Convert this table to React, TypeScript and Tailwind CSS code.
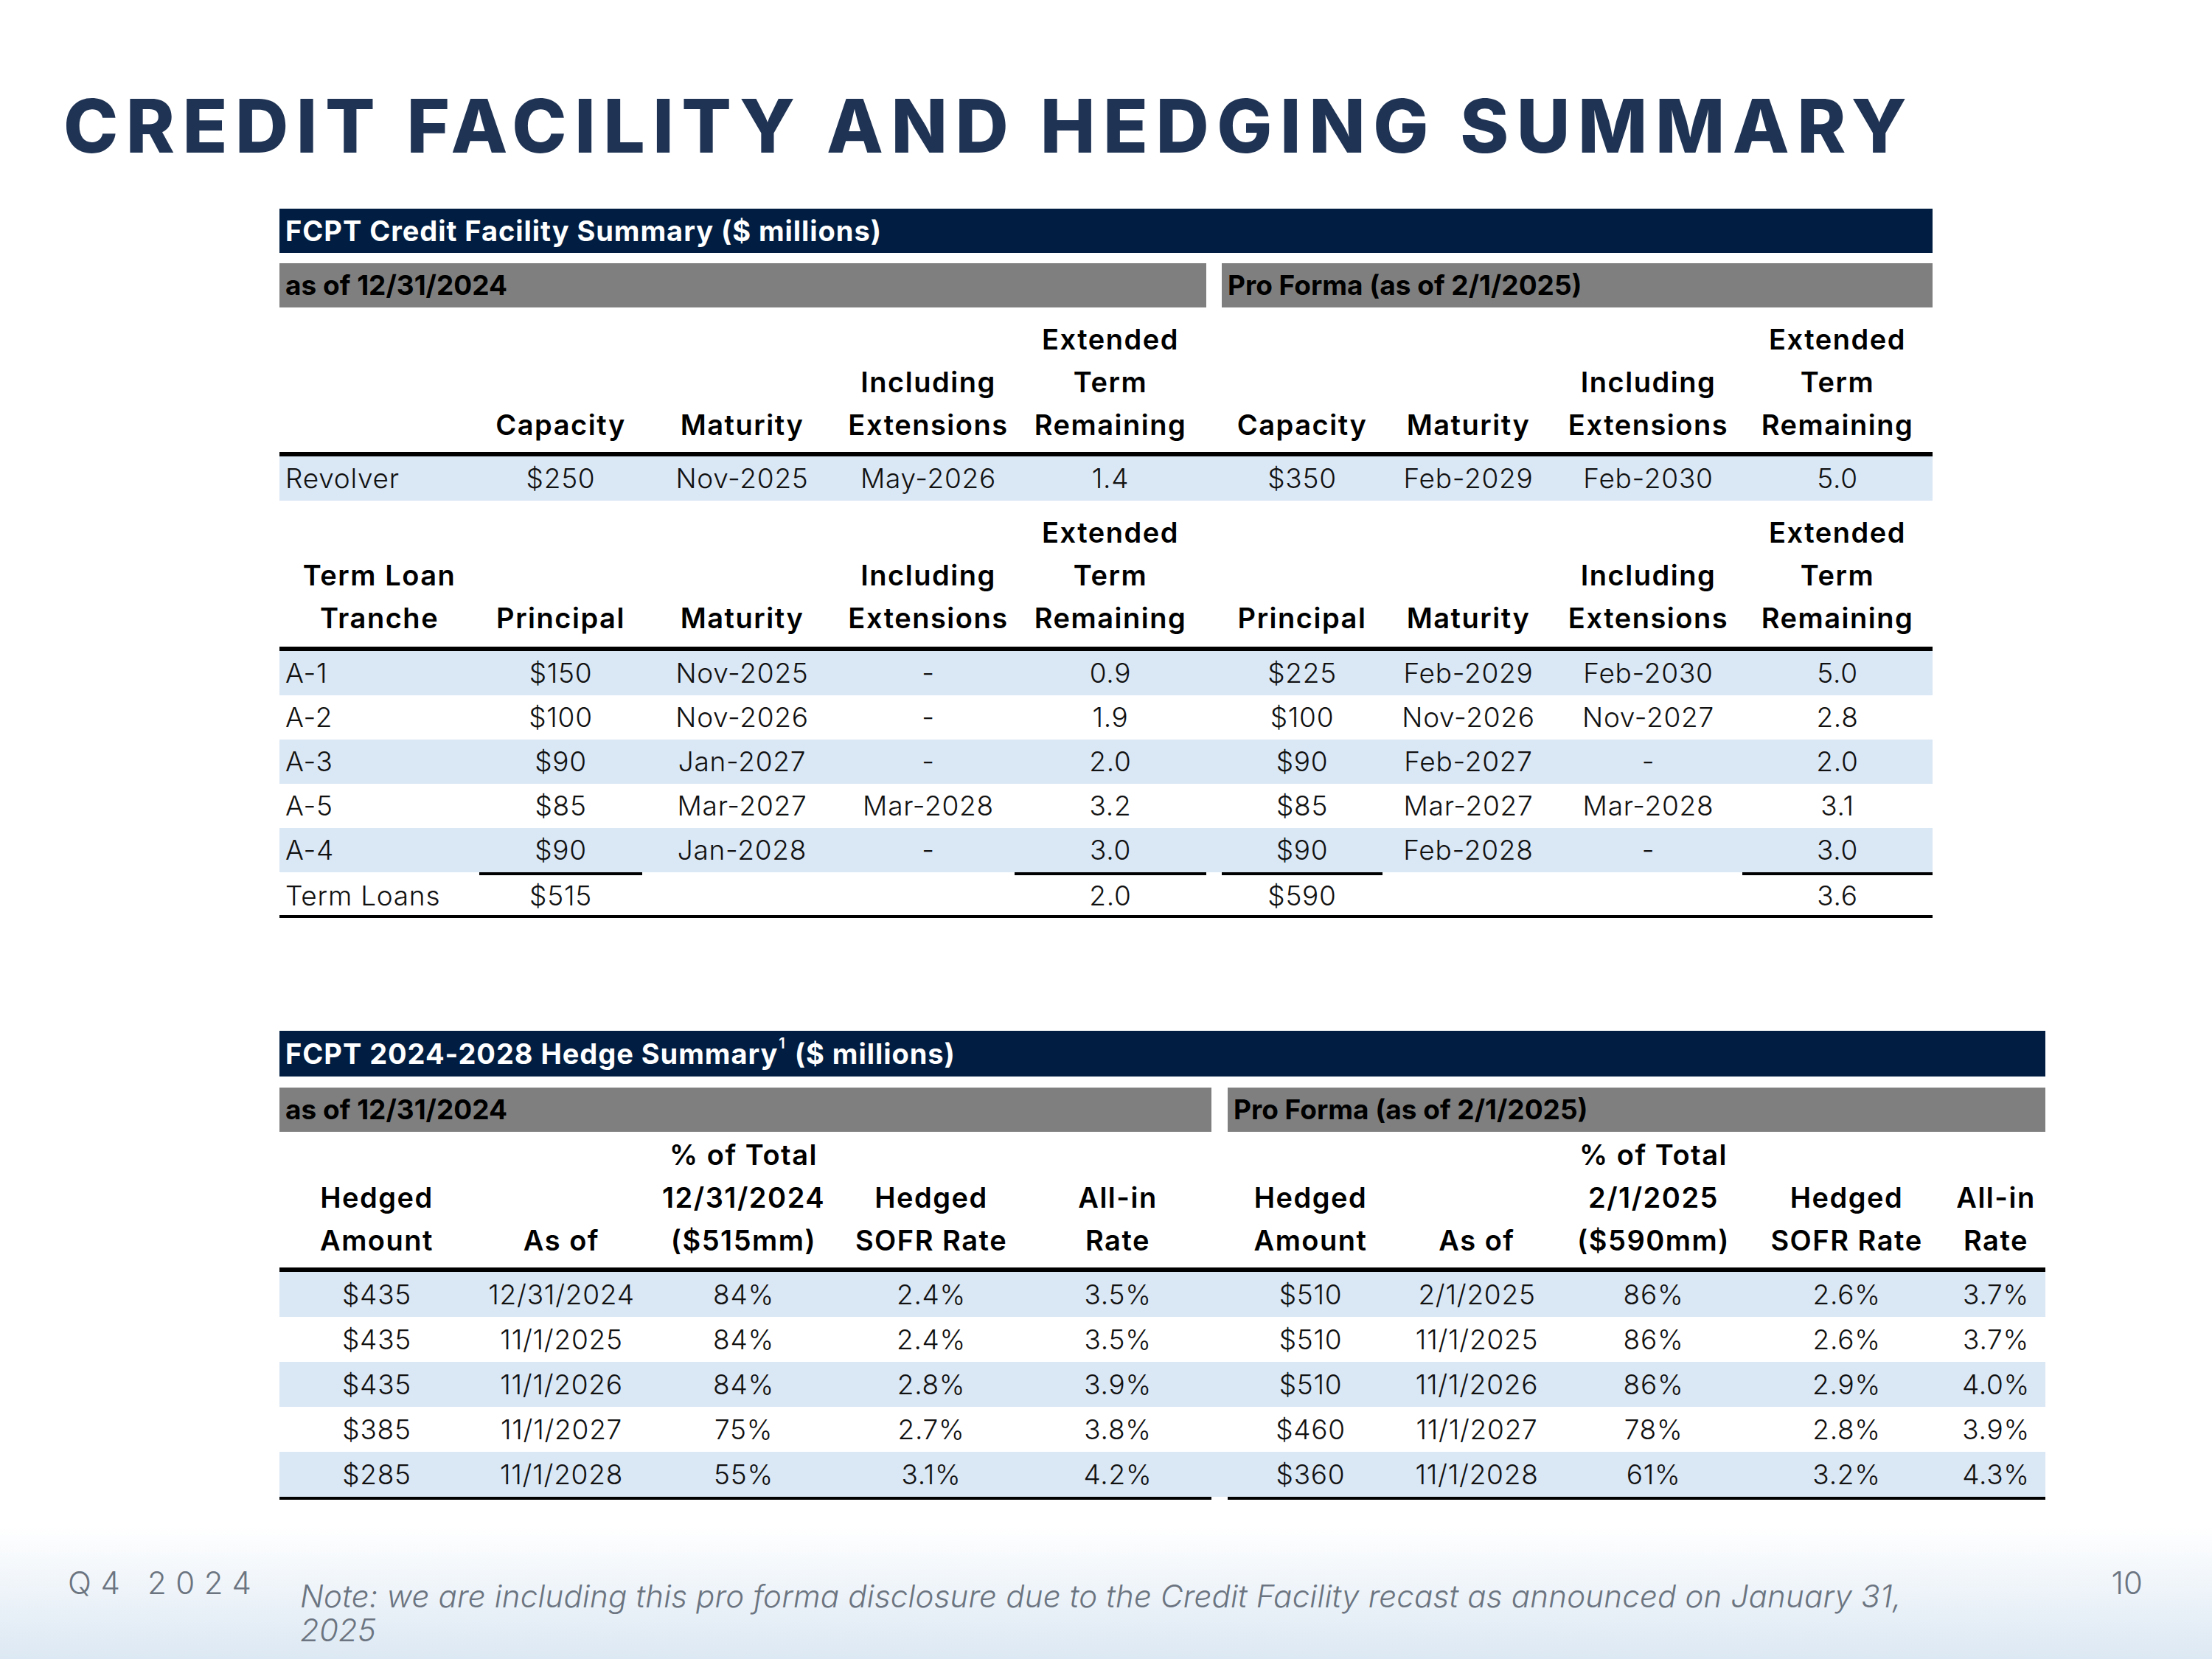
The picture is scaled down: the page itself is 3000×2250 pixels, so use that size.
import React from "react";

const FONT = "font-['Inter','Open_Sans','Liberation_Sans',sans-serif]";

const creditCols = "grid-cols-[271px_221px_271px_234px_260px_21px_218px_233px_255px_258px]";
const hedgeCols = "grid-cols-[264px_237px_257px_252px_254px_22px_225px_226px_253px_271px_134px]";

type Row = { cells: string[]; blue: boolean };

const revolver: Row = {
  cells: ["Revolver", "$250", "Nov-2025", "May-2026", "1.4", "", "$350", "Feb-2029", "Feb-2030", "5.0"],
  blue: true,
};

const tranches: Row[] = [
  { cells: ["A-1", "$150", "Nov-2025", "-", "0.9", "", "$225", "Feb-2029", "Feb-2030", "5.0"], blue: true },
  { cells: ["A-2", "$100", "Nov-2026", "-", "1.9", "", "$100", "Nov-2026", "Nov-2027", "2.8"], blue: false },
  { cells: ["A-3", "$90", "Jan-2027", "-", "2.0", "", "$90", "Feb-2027", "-", "2.0"], blue: true },
  { cells: ["A-5", "$85", "Mar-2027", "Mar-2028", "3.2", "", "$85", "Mar-2027", "Mar-2028", "3.1"], blue: false },
  { cells: ["A-4", "$90", "Jan-2028", "-", "3.0", "", "$90", "Feb-2028", "-", "3.0"], blue: true },
];

const totals = ["Term Loans", "$515", "", "", "2.0", "", "$590", "", "", "3.6"];
const totalRuled = [1, 4, 6, 9];

const hedges: Row[] = [
  { cells: ["$435", "12/31/2024", "84%", "2.4%", "3.5%", "", "$510", "2/1/2025", "86%", "2.6%", "3.7%"], blue: true },
  { cells: ["$435", "11/1/2025", "84%", "2.4%", "3.5%", "", "$510", "11/1/2025", "86%", "2.6%", "3.7%"], blue: false },
  { cells: ["$435", "11/1/2026", "84%", "2.8%", "3.9%", "", "$510", "11/1/2026", "86%", "2.9%", "4.0%"], blue: true },
  { cells: ["$385", "11/1/2027", "75%", "2.7%", "3.8%", "", "$460", "11/1/2027", "78%", "2.8%", "3.9%"], blue: false },
  { cells: ["$285", "11/1/2028", "55%", "3.1%", "4.2%", "", "$360", "11/1/2028", "61%", "3.2%", "4.3%"], blue: true },
];

const creditHead1 = ["", "Capacity", "Maturity", "Including\nExtensions", "Extended\nTerm\nRemaining", "", "Capacity", "Maturity", "Including\nExtensions", "Extended\nTerm\nRemaining"];
const creditHead2 = ["Term Loan\nTranche", "Principal", "Maturity", "Including\nExtensions", "Extended\nTerm\nRemaining", "", "Principal", "Maturity", "Including\nExtensions", "Extended\nTerm\nRemaining"];
const hedgeHead = ["Hedged\nAmount", "As of", "% of Total\n12/31/2024\n($515mm)", "Hedged\nSOFR Rate", "All-in\nRate", "", "Hedged\nAmount", "As of", "% of Total\n2/1/2025\n($590mm)", "Hedged\nSOFR Rate", "All-in\nRate"];

function HeaderRow({ cols, labels, height, pb }: { cols: string; labels: string[]; height: string; pb: string }) {
  return (
    <div className={`grid ${cols} ${height} ${pb}`}>
      {labels.map((l, i) => (
        <div key={i} className="flex flex-col justify-end items-center text-[38px] leading-[58px] font-semibold tracking-[0.04em] text-black whitespace-nowrap">
          {l.split("\n").map((line, j) => (
            <div key={j}>{line}</div>
          ))}
        </div>
      ))}
    </div>
  );
}

function DataRow({ cols, row, h, leftLabel }: { cols: string; row: Row; h: string; leftLabel?: boolean }) {
  return (
    <div className={`grid ${cols} ${h} ${row.blue ? "bg-[#dae7f5]" : "bg-white"}`}>
      {row.cells.map((c, i) => (
        <div
          key={i}
          className={`flex items-center text-[37px] font-light tracking-[0.02em] text-[#111] whitespace-nowrap ${
            leftLabel && i === 0 ? "justify-start pl-[8px]" : "justify-center"
          }`}
        >
          {c}
        </div>
      ))}
    </div>
  );
}

function NavyBar({ children, h = "h-[60px]" }: { children: React.ReactNode; h?: string }) {
  return (
    <div className={`${h} bg-[#011e42] flex items-center pl-[8px] text-[38px] font-bold tracking-[0.025em] text-white whitespace-nowrap`}>
      {children}
    </div>
  );
}

function GrayBar({ children }: { children: React.ReactNode }) {
  return (
    <div className="h-[60px] bg-[#7f7f7f] flex items-center pl-[8px] text-[37px] font-bold text-black whitespace-nowrap">
      {children}
    </div>
  );
}

function CreditTable() {
  return (
    <div className="w-[2242px] ml-[379px] mt-[62px]">
      <NavyBar>FCPT Credit Facility Summary ($ millions)</NavyBar>
      <div className="flex mt-[14px]">
        <div className="w-[1257px]">
          <GrayBar>as of 12/31/2024</GrayBar>
        </div>
        <div className="w-[964px] ml-[21px]">
          <GrayBar>Pro Forma (as of 2/1/2025)</GrayBar>
        </div>
      </div>
      <HeaderRow cols={creditCols} labels={creditHead1} height="h-[196px]" pb="pb-[8px]" />
      <div className="border-t-[6px] border-black">
        <DataRow cols={creditCols} row={revolver} h="h-[60px]" leftLabel />
      </div>
      <HeaderRow cols={creditCols} labels={creditHead2} height="h-[198px]" pb="pb-[10px]" />
      <div className="border-t-[6px] border-black">
        {tranches.map((r, i) => (
          <DataRow key={i} cols={creditCols} row={r} h="h-[60px]" leftLabel />
        ))}
      </div>
      <div className={`grid ${creditCols} h-[62px] border-b-4 border-black`}>
        {totals.map((c, i) => (
          <div
            key={i}
            className={`flex items-center border-t-4 text-[37px] font-light tracking-[0.02em] text-[#111] whitespace-nowrap ${
              totalRuled.includes(i) ? "border-black" : "border-transparent"
            } ${i === 0 ? "justify-start pl-[8px]" : "justify-center"}`}
          >
            {c}
          </div>
        ))}
      </div>
    </div>
  );
}

function HedgeTable() {
  return (
    <div className="w-[2395px] ml-[379px] mt-[153px]">
      <NavyBar h="h-[62px]">
        FCPT 2024-2028 Hedge Summary<sup className="text-[20px] font-semibold -top-[14px] ml-[1px]">1</sup>
        <span className="ml-[12px]">($ millions)</span>
      </NavyBar>
      <div className="flex mt-[15px]">
        <div className="w-[1264px]">
          <GrayBar>as of 12/31/2024</GrayBar>
        </div>
        <div className="w-[1109px] ml-[22px]">
          <GrayBar>Pro Forma (as of 2/1/2025)</GrayBar>
        </div>
      </div>
      <HeaderRow cols={hedgeCols} labels={hedgeHead} height="h-[184px]" pb="pb-[8px]" />
      <div className="border-t-[6px] border-black">
        {hedges.map((r, i) => (
          <DataRow key={i} cols={hedgeCols} row={r} h="h-[61px]" />
        ))}
      </div>
      <div className="flex h-[4px]">
        <div className="w-[1264px] bg-black" />
        <div className="w-[1109px] ml-[22px] bg-black" />
      </div>
    </div>
  );
}

export default function App() {
  return (
    <div className={`w-[3000px] h-[2250px] bg-white flex flex-col overflow-hidden ${FONT}`}>
      <h1 className="pt-[121px] pl-[86px] text-[100px] leading-none font-extrabold tracking-[0.105em] text-[#1f3354] whitespace-nowrap">
        CREDIT FACILITY AND HEDGING SUMMARY
      </h1>
      <CreditTable />
      <HedgeTable />
      <div className="mt-auto h-[180px] bg-gradient-to-b from-white to-[#dce8f3] flex items-start">
        <div className="w-[407px] shrink-0 pl-[92px] pt-[52px] text-[42px] leading-[50px] font-light tracking-[0.3em] text-[#6b7480] whitespace-nowrap">
          Q4 2024
        </div>
        <div className="shrink-0 pt-[72px] text-[42px] leading-[46px] italic font-light tracking-[0.005em] text-[#6b7480] w-[2300px]">
          Note: we are including this pro forma disclosure due to the Credit Facility recast as announced on January 31,
          <br />
          2025
        </div>
        <div className="ml-auto pr-[94px] pt-[52px] text-[42px] leading-[50px] font-light text-[#6b7480]">10</div>
      </div>
    </div>
  );
}
